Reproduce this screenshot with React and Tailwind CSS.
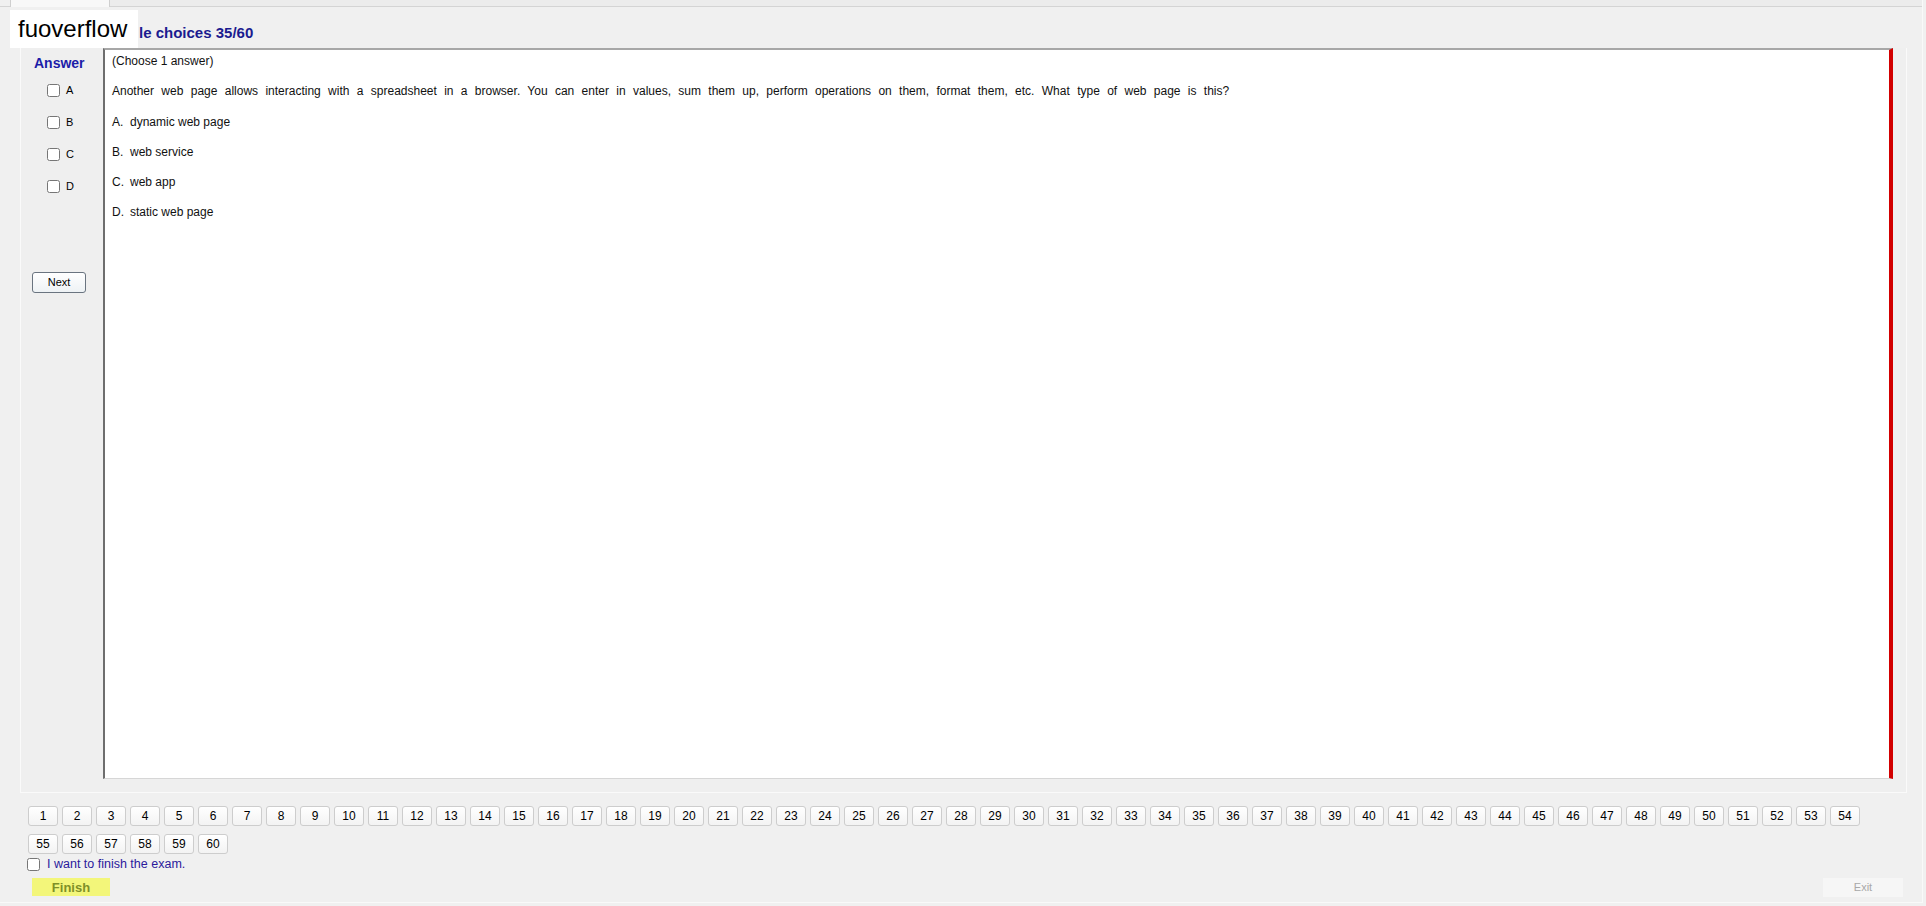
import React from "react";

const nums1 = Array.from({ length: 54 }, (_, i) => i + 1);
const nums2 = Array.from({ length: 6 }, (_, i) => i + 55);

function NavBtn({ n }) {
  return (
    <div className="w-[30px] h-[20px] shrink-0 flex items-center justify-center rounded-[3px] border border-[#cdcdcd] bg-gradient-to-b from-white to-[#f3f3f3] text-[12px] text-black leading-none">
      {n}
    </div>
  );
}

export default function App() {
  const opts = [
    ["A.", "dynamic web page"],
    ["B.", "web service"],
    ["C.", "web app"],
    ["D.", "static web page"],
  ];
  return (
    <div
      className="relative w-[1926px] h-[906px] overflow-hidden bg-[#f0f0f0] text-black"
      style={{ fontFamily: '"Liberation Sans", Arial, sans-serif' }}
    >
      <div className="w-[1923px] h-[903px] border-r border-b border-[#f9f9f9] flex flex-col">
        {/* tab strip */}
        <div className="h-[7px] flex shrink-0">
          <div className="w-[10px] border-b border-[#d4d4d4]" />
          <div className="w-[100px] bg-[#f8f8f8] border-x border-[#cfcfcf]" />
          <div className="flex-1 bg-[#ececec] border-b border-[#d4d4d4]" />
        </div>

        {/* heading */}
        <div className="h-[41px] shrink-0 pl-[139px] pt-[17px]">
          <div className="text-[15px] font-bold leading-[17px] text-[#1b1b8f]">
            le choices 35/60
          </div>
        </div>

        {/* group box */}
        <div className="ml-[20px] w-[1887px] h-[745px] shrink-0 flex border-l border-r border-b border-[#fafafa] bg-[#efefef]">
          {/* answer column */}
          <div className="w-[82px] shrink-0 flex flex-col items-start">
            <div className="pt-[7px] pl-[13px] text-[14px] font-bold leading-[16px] text-[#1c1ca8]">
              Answer
            </div>
            <div className="flex flex-col pl-[26px] mt-[13px] gap-[19px]">
              {["A", "B", "C", "D"].map((l) => (
                <label key={l} className="flex items-center h-[13px] gap-[6px] text-[11px] leading-none">
                  <input type="checkbox" className="w-[13px] h-[13px] m-0" />
                  <span>{l}</span>
                </label>
              ))}
            </div>
            <div className="ml-[11px] mt-[79px] w-[54px] h-[21px] rounded-[3px] border border-[#6a7480] bg-gradient-to-b from-white to-[#eef2f5] flex items-center justify-center text-[11px] leading-none">
              Next
            </div>
          </div>

          {/* question panel */}
          <div className="w-[1790px] h-[731px] shrink-0 bg-white border-l-2 border-l-[#6e6e6e] border-t-2 border-t-[#a7a7a7] border-r-4 border-r-[#d20000] border-b border-b-[#d6d6d6] pl-[7px] pt-[4px] text-[12px] text-[#111]">
            <div className="h-[14px] leading-[14px]">(Choose 1 answer)</div>
            <div className="h-[14px] leading-[14px] mt-[16px] [word-spacing:4px]">
              Another web page allows interacting with a spreadsheet in a browser. You can enter in values, sum them up, perform operations on them, format them, etc. What type of web page is this?
            </div>
            {opts.map(([k, t], i) => (
              <div key={k} className={`h-[14px] leading-[14px] flex ${i === 0 ? "mt-[17px]" : "mt-[16px]"}`}>
                <span className="w-[18px]">{k}</span>
                <span>{t}</span>
              </div>
            ))}
          </div>
        </div>

        {/* navigation */}
        <div className="pl-[28px] mt-[13px] flex gap-[4px]">
          {nums1.map((n) => (
            <NavBtn key={n} n={n} />
          ))}
        </div>
        <div className="pl-[28px] mt-[8px] flex gap-[4px]">
          {nums2.map((n) => (
            <NavBtn key={n} n={n} />
          ))}
        </div>
        <label className="pl-[27px] mt-[3px] h-[14px] flex items-center gap-[7px]">
          <input type="checkbox" className="w-[13px] h-[13px] m-0" />
          <span className="text-[12.5px] leading-none text-[#2b1a9c]">I want to finish the exam.</span>
        </label>
        <div className="mt-[7px] flex justify-between pl-[32px] pr-[19px]">
          <div className="w-[78px] h-[18px] bg-[#f3f67a] flex items-center justify-center text-[13px] font-bold leading-none text-[#7f8f28]">
            Finish
          </div>
          <div className="w-[80px] h-[19px] bg-[#f6f6f6] flex items-center justify-center text-[11px] leading-none text-[#a8a8a8]">
            Exit
          </div>
        </div>
      </div>

      {/* watermark overlay */}
      <div className="absolute left-[10px] top-[10px] w-[128px] h-[38px] bg-white pl-[8px] text-[24px] leading-[38px] text-black">
        fuoverflow
      </div>
    </div>
  );
}
